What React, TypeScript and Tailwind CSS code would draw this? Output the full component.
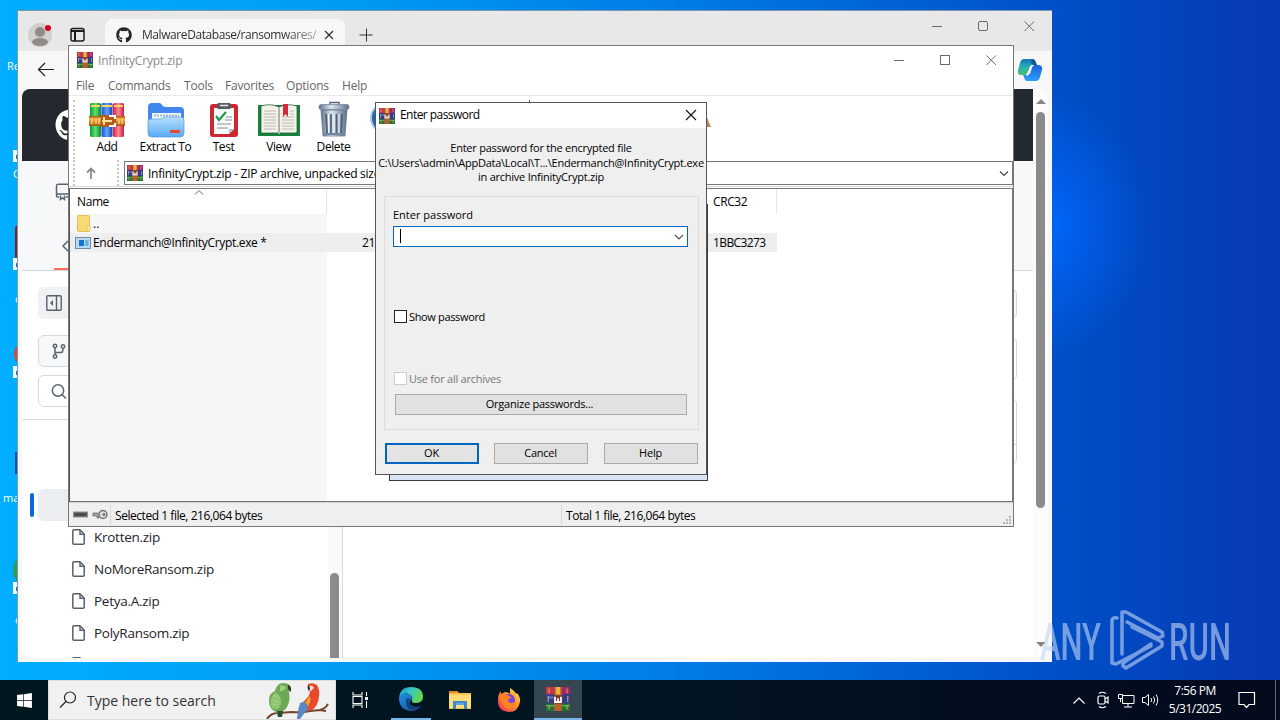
import React from 'react';
import { FaGithub, FaWindows } from 'react-icons/fa';

const WinRarIcon = ({ size = 16 }: { size?: number }) => (
  <svg width={size} height={size} viewBox="0 0 16 16" className="shrink-0">
    <rect y="0" width="16" height="5" fill="#a3266f" />
    <rect y="0" width="5" height="5" fill="#c93549" />
    <rect y="5" width="16" height="6" fill="#2b3e92" />
    <rect x="1" y="6" width="5" height="2" fill="#4a69c4" />
    <rect y="11" width="16" height="5" fill="#23733a" />
    <rect y="12" width="16" height="1" fill="#52ad50" />
    <rect x="5.500" width="5" height="16" fill="#b9602b" />
    <rect x="6.500" width="3" height="5" fill="#f0b13e" />
    <rect x="5" y="5.500" width="6" height="5.500" fill="#7c3320" />
    <path d="M6 6.500v3.500h4V6.500M8 7.500v2" fill="none" stroke="#fff" strokeWidth="1.200" />
    <path d="M2 1v3M2 12v3M14 1v3M14 12v3M1.500 6v4M14.500 6v4" stroke="#d49a4b" strokeWidth=".8" />
  </svg>
);

const AddIcon = () => (
  <svg width="36" height="36" viewBox="0 0 36 36">
    <defs>
      <linearGradient id="gG"><stop stopColor="#0a9c3c" /><stop offset=".5" stopColor="#5fe06c" /><stop offset="1" stopColor="#13813a" /></linearGradient>
      <linearGradient id="gB"><stop stopColor="#1552d8" /><stop offset=".5" stopColor="#62a4ff" /><stop offset="1" stopColor="#1a3fb5" /></linearGradient>
      <linearGradient id="gR"><stop stopColor="#d3213b" /><stop offset=".5" stopColor="#ff8894" /><stop offset="1" stopColor="#c31c43" /></linearGradient>
      <linearGradient id="gO" x2="0" y2="1"><stop stopColor="#a35312" /><stop offset=".3" stopColor="#ffb445" /><stop offset="1" stopColor="#a9530d" /></linearGradient>
    </defs>
    <rect x="1" y="1" width="11" height="34" rx="1.500" fill="url(#gG)" />
    <rect x="12.500" y="1" width="11" height="34" rx="1.500" fill="url(#gB)" />
    <rect x="24" y="1" width="11" height="34" rx="1.500" fill="url(#gR)" />
    <path d="M2 4h9M13 4h10M25 4h9" stroke="#ffd75a" strokeWidth="2" />
    <path d="M0 14h36v10H0z" fill="url(#gO)" />
    <path d="M3 17v5M7 17v5M10 16v6M30 17v5M33 17v5" stroke="#ffd583" strokeWidth="1.300" />
    <rect x="12" y="13" width="15" height="12" rx="1" fill="#b55d18" />
    <path d="M20 14h6v3M26 21v3h-6" fill="none" stroke="#fff" strokeWidth="2" />
    <path d="M13 19h10M15 15v8" stroke="#ffe29a" strokeWidth="2" />
  </svg>
);

const ExtractIcon = () => (
  <svg width="38" height="36" viewBox="0 0 38 36">
    <defs>
      <linearGradient id="fo" x2="0" y2="1"><stop stopColor="#b6e0ff" /><stop offset="1" stopColor="#5aa9f2" /></linearGradient>
    </defs>
    <path d="M1 5q0-4 4-4h7q2 0 3 2t4 2h14q4 0 4 4v14H1z" fill="#4287ef" />
    <path d="M5 11h29v8H5z" fill="#f2f6fb" />
    <path d="M7 13.500h25" stroke="#9db5cf" strokeWidth="2" strokeDasharray="2 1" />
    <path d="M1 19q0-2 3-2h10l3-2h17q3 0 3 3v13q0 4-4 4H5q-4 0-4-4z" fill="url(#fo)" stroke="#559be0" strokeWidth=".7" />
    <rect x="23" y="28" width="10" height="3" rx="1" fill="#e74831" />
  </svg>
);

const TestIcon = () => (
  <svg width="30" height="36" viewBox="0 0 30 36">
    <rect x="1" y="2" width="28" height="33" rx="3" fill="#cf2633" />
    <path d="M5 6h20v21l-5 5H5z" fill="#fbfbfb" />
    <path d="M20 32v-5h5z" fill="#b9bec4" />
    <rect x="8" y="1" width="14" height="6" rx="1.500" fill="#555d64" />
    <path d="M11 3.500h8" stroke="#e8e8e8" strokeWidth="1.500" />
    <path d="m7 14 3 4 7-8" fill="none" stroke="#239a48" strokeWidth="2.200" />
    <path d="M17 15h6M16 18h7M8 22h14M8 26h11" stroke="#8a9095" />
  </svg>
);

const ViewIcon = () => (
  <svg width="44" height="36" viewBox="0 0 44 36">
    <path d="M1 3h42v31H1z" fill="#1b823b" />
    <path d="M4 4q10-3 18 1q8-4 18-1v27H4z" fill="#f3f1ea" stroke="#0d5a26" strokeWidth=".7" />
    <path d="M22 5v27" stroke="#b5b1a6" strokeWidth="2" />
    <path d="M7 9h12M7 12h12M7 15h12M7 18h12M7 21h12M7 24h12M7 27h12M25 15h12M25 18h12M25 21h12M25 24h12M25 27h12M33 9h4M33 12h4" stroke="#bdbab2" />
    <path d="M26 2h5v13l-2.500-3-2.500 3z" fill="#d42b39" />
  </svg>
);

const DeleteIcon = () => (
  <svg width="32" height="37" viewBox="0 0 32 37">
    <defs>
      <linearGradient id="tr"><stop stopColor="#5f7389" /><stop offset=".4" stopColor="#dde7f0" /><stop offset="1" stopColor="#5d7088" /></linearGradient>
    </defs>
    <path d="M12 4V1.500h9V4" fill="none" stroke="#55687d" strokeWidth="1.500" />
    <rect x="1" y="3.500" width="30" height="5" rx="2" fill="url(#tr)" stroke="#6d8097" strokeWidth=".7" />
    <path d="M3 9h26l-2 26H5z" fill="url(#tr)" stroke="#5a6f86" strokeWidth=".7" />
    <path d="M8 13l1 19M13 13v19M18.500 13v19M24 13l-1 19" stroke="#4d627a" strokeWidth="1.800" />
    <path d="M10.500 13v19M16 13v19M21 13v19" stroke="#f3f8fc" />
    <path d="M5 33h22" stroke="#7187a0" strokeWidth="2" />
  </svg>
);

const tools = [
  { label: 'Add', icon: <AddIcon />, box: 'w-[60px]' },
  { label: 'Extract To', icon: <ExtractIcon />, box: 'w-[57px]' },
  { label: 'Test', icon: <TestIcon />, box: 'w-[59px]' },
  { label: 'View', icon: <ViewIcon />, box: 'w-[51px]' },
  { label: 'Delete', icon: <DeleteIcon />, box: 'w-[59px]' },
];

const menus = [
  { label: 'File', box: 'w-[32px]' },
  { label: 'Commands', box: 'w-[76px]' },
  { label: 'Tools', box: 'w-[41px]' },
  { label: 'Favorites', box: 'w-[61px]' },
  { label: 'Options', box: 'w-[56px]' },
  { label: 'Help', box: 'w-[40px]' },
];

const files = ['Krotten.zip', 'NoMoreRansom.zip', 'Petya.A.zip', 'PolyRansom.zip', ''];

const FileIcon = () => (
  <svg width="13" height="16" viewBox="0 0 13 16" fill="none" stroke="#59636e" strokeWidth="1.500">
    <path d="M.8 1.800q0-1 1-1h6L12.200 5v9.200q0 1-1 1H1.800q-1 0-1-1z" />
    <path d="M8 1v4.300h4" />
  </svg>
);

const WindowControls = ({ rounded }: { rounded?: boolean }) => (
  <svg width="104" height="12" viewBox="0 0 104 12" fill="none" stroke="#6b6b6b">
    <path d="M0 6.500h10" />
    <rect x="46.500" y="1.500" width="9" height="9" rx={rounded ? 1.5 : 0} />
    <path d="m92.500 1.500 9.500 9.500M102 1.500 92.500 11" />
  </svg>
);

const ShortcutArrow = () => (
  <svg width="12" height="12" viewBox="0 0 12 12">
    <rect width="12" height="12" fill="#f4f8fb" />
    <path d="M3 9V6q0-2 3-2h1V2l3 3-3 3V6H5v3z" fill="#1b62ad" />
  </svg>
);

function DesktopIcons() {
  return (
    <div className="absolute left-0 top-0 h-[680px] w-[18px] overflow-hidden text-[11px] text-white">
      <span className="absolute left-[7px] top-[58px]">Re</span>
      <span className="absolute left-[13px] top-[166px]">C</span>
      <span className="absolute left-[3px] top-[490px]">ma</span>
      <span className="absolute left-[15px] top-[291px]">c</span>
      <span className="absolute left-[15px] top-[612px]">o</span>
      <div className="absolute left-[15px] top-[225px] h-9 w-6 rounded bg-[#8e1b22]" />
      <div className="absolute left-[14px] top-[342px] h-6 w-6 rounded-full bg-[#df4536]" />
      <div className="absolute left-[15px] top-[452px] h-[22px] w-6 bg-[#174ea8]" />
      <div className="absolute left-[13px] top-[552px] h-9 w-9 rounded-full bg-[#2d9d4c]" />
      <div className="absolute left-[13px] top-[150px]"><ShortcutArrow /></div>
      <div className="absolute left-[13px] top-[258px]"><ShortcutArrow /></div>
      <div className="absolute left-[13px] top-[366px]"><ShortcutArrow /></div>
      <div className="absolute left-[13px] top-[582px]"><ShortcutArrow /></div>
    </div>
  );
}

function BrowserWindow() {
  return (
    <div className="absolute left-[17px] top-[10px] flex h-[652px] w-[1035px] flex-col border-t border-l border-[#7b98ad] bg-[#f7f7f7]">
      <div className="flex h-10 shrink-0 bg-[#e8e8e8]">
        <div className="relative mt-3 ml-[10px] h-6 w-6 rounded-full bg-[#d2cfcc]">
          <svg width="24" height="24" viewBox="0 0 24 24" fill="#8f8b87">
            <circle cx="12" cy="9" r="5" />
            <ellipse cx="12" cy="19" rx="8" ry="4" />
          </svg>
          <div className="absolute top-0.5 left-[17px] h-1.5 w-1.5 rounded-full bg-[#d5001f]" />
        </div>
        <svg width="16" height="16" viewBox="0 0 16 16" className="mt-4 ml-[18px]" fill="none" stroke="#1b1b1b" strokeWidth="1.500">
          <rect x="1" y="1.500" width="13" height="12.500" rx="2" />
          <path d="M1 4h13M5 4v10" strokeWidth="2" />
        </svg>
        <div className="mt-2 ml-[19px] flex h-8 w-[240px] items-center rounded-t-lg bg-[#f7f7f7] pl-[11px]">
          <FaGithub size={16} color="#24292f" />
          <div className="ml-[10px] w-[174px] overflow-hidden bg-linear-to-r from-[#2b2b2b] from-80% to-[#aaa] bg-clip-text text-[12px] tracking-[-0.420px] whitespace-nowrap text-transparent">
            MalwareDatabase/ransomwares/
          </div>
          <svg width="10" height="10" viewBox="0 0 10 10" className="ml-[8px]" stroke="#333" strokeWidth="1.300">
            <path d="m1 1 8 8M9 1 1 9" />
          </svg>
        </div>
        <svg width="14" height="14" viewBox="0 0 14 14" className="mt-[17px] ml-[14px]" stroke="#333">
          <path d="M7.500 .5v13M.5 7h13" />
        </svg>
        <div className="mt-[9px] ml-auto mr-[16px]">
          <WindowControls rounded />
        </div>
      </div>

      <div className="flex h-[38px] shrink-0 items-center justify-between">
        <svg width="18" height="16" viewBox="0 0 18 16" className="ml-[19px]" fill="none" stroke="#222" strokeWidth="1.200">
          <path d="M17 7.500H1.500M8 1 1.500 7.500 8 14" />
        </svg>
        <svg width="26" height="24" viewBox="0 0 26 24" className="mr-[9px]">
          <defs>
            <linearGradient id="cpa" x2="0" y2="1"><stop stopColor="#1474b8" /><stop offset=".5" stopColor="#27b0b5" /><stop offset="1" stopColor="#4cc272" /></linearGradient>
            <linearGradient id="cpb" x2="0" y2="1"><stop stopColor="#1b60d8" /><stop offset="1" stopColor="#2ea0fb" /></linearGradient>
          </defs>
          <path d="M7 1h9q2 0 3 4l1 2h-4q-3 0-4 4l-2 6H4q-4 0-3-5l2-7q1-4 4-4z" fill="url(#cpa)" />
          <path d="M19 23h-9q-2 0-3-4l-1-2h4q3 0 4-4l2-6h6q4 1 3 5l-2 7q-1 4-4 4z" fill="url(#cpb)" />
          <path d="M17 7q-3 0-4 4l-2 6H9q2-1 3-4l1-3q1-3 4-3z" fill="#fff" stroke="#fff" />
          <path d="M15 1q3 0 5 6h-4q-2-1-2-3z" fill="#17549b" />
        </svg>
      </div>

      <div className="mr-[4px] ml-[4px] flex h-[569px] overflow-hidden rounded-lg bg-white">
        <div className="flex w-[1011px] flex-col">
          <div className="flex h-[72px] shrink-0 items-center bg-[#24292f] pl-[33px]">
            <FaGithub size={32} color="#fff" />
          </div>
          <div className="h-[110px] shrink-0 border-b border-[#d1d9e0] bg-[#f6f8fa] pl-[33px]">
            <svg width="16" height="18" viewBox="0 0 16 18" className="mt-[22px]" fill="none" stroke="#59636e" strokeWidth="1.500">
              <path d="M4 14H3q-1.500 0-1.500-1.500V3Q1.500 1.200 3 1.200h11V14h-3M1.500 12q0-1 1.500-1h11M5.500 12.500v4L7.500 15l2 1.500v-4" />
            </svg>
            <svg width="12" height="14" viewBox="0 0 12 14" className="mt-[38px] ml-[6px]" fill="none" stroke="#59636e" strokeWidth="1.500">
              <path d="M7 2 2 7l5 5" />
            </svg>
            <div className="mt-[15px] -ml-px h-[2px] w-24 bg-[#fd6d5c]" />
          </div>
          <div className="flex min-h-0 flex-1">
            <div className="flex w-[321px] shrink-0 flex-col border-r border-[#d1d9e0]">
              <div className="mt-4 ml-4 flex h-8 w-32 items-center rounded-md bg-[#eff1f3] pl-2">
                <svg width="16" height="16" viewBox="0 0 16 16" fill="none" stroke="#59636e" strokeWidth="1.400">
                  <rect x=".8" y=".8" width="14.400" height="14.400" rx="1" />
                  <path d="M10.500 1v14" />
                  <path d="M7 5 4 8l3 3z" fill="#59636e" stroke="none" />
                </svg>
              </div>
              <div className="mt-4 ml-4 flex h-8 w-64 items-center rounded-md border border-[#d1d9e0] bg-[#f6f8fa] pl-[13px]">
                <svg width="14" height="16" viewBox="0 0 14 16" fill="none" stroke="#59636e" strokeWidth="1.500">
                  <circle cx="3" cy="3" r="1.700" />
                  <circle cx="3" cy="13.500" r="1.700" />
                  <circle cx="11" cy="3.500" r="1.700" />
                  <path d="M3 5v6.500M3 9.500h6q2 0 2-4" />
                </svg>
              </div>
              <div className="mt-2 ml-4 flex h-8 w-64 items-center rounded-md border border-[#d1d9e0] pl-[12px]">
                <svg width="16" height="16" viewBox="0 0 16 16" fill="none" stroke="#59636e" strokeWidth="1.500">
                  <circle cx="7" cy="7.500" r="5.700" />
                  <path d="m11 11.500 4 4" />
                </svg>
              </div>
              <div className="mt-3 h-px shrink-0 bg-[#d8dde2]" />
              <div className="flex min-h-0 flex-1">
                <div className="flex-1">
                  <div className="mt-[69px] ml-[8px] flex h-8 items-center">
                    <div className="h-6 w-1 rounded-full bg-[#0969da]" />
                    <div className="ml-[4px] h-8 flex-1 rounded-md bg-[#ebedf0]" />
                  </div>
                  {files.map((file) => (
                    <div key={file} className="flex h-8 items-center pl-[50px] text-[13.500px] tracking-[-0.270px] text-[#1f2328]">
                      <FileIcon />
                      <span className="ml-[9px]">{file}</span>
                    </div>
                  ))}
                </div>
                <div className="w-[14px] bg-[#fafafa] pt-[153px] pl-[2px]">
                  <div className="h-24 w-[9px] rounded-t-full bg-[#8b8b8b]" />
                </div>
              </div>
            </div>
            <div className="flex flex-1 flex-col items-end">
              <div className="mt-[17px] mr-4 h-[31px] w-32 rounded-md border border-[#d1d9e0] bg-[#f6f8fa]" />
              <div className="mt-[18px] mr-4 h-[44px] w-32 rounded-md border border-[#d1d9e0]" />
              <div className="mt-[17px] mr-4 h-[67px] w-32 rounded-md border border-[#d1d9e0] pt-[45px]">
                <div className="h-px bg-[#d1d9e0]" />
              </div>
            </div>
          </div>
        </div>
        <div className="flex w-[15px] flex-col items-center bg-[#fcfcfc] pt-[10px]">
          <div className="h-0 w-0 border-x-[5px] border-b-[5px] border-x-transparent border-b-[#858585]" />
          <div className="mt-2 h-[396px] w-[9px] rounded-full bg-[#8b8b8b]" />
          <div className="mt-auto mb-[11px] h-0 w-0 border-x-[5px] border-t-[5px] border-x-transparent border-t-[#858585]" />
        </div>
      </div>
    </div>
  );
}

function ArchiveWindow() {
  return (
    <div className="absolute left-[68px] top-[45px] flex h-[482px] w-[946px] flex-col overflow-hidden border border-[#777] bg-white text-[12px] tracking-[-0.400px] text-black">
      <div className="flex h-[30px] shrink-0 items-center pb-[2px] pl-2 text-[#8b8b8b]">
        <WinRarIcon />
        <span className="mt-px ml-[5px] tracking-[-0.200px]">InfinityCrypt.zip</span>
        <div className="mr-[15px] ml-auto">
          <WindowControls />
        </div>
      </div>
      <div className="flex h-5 shrink-0 items-center border-b border-[#e9e9e9] pl-[7px] tracking-[-0.200px] text-[#666]">
        {menus.map((m) => (
          <span key={m.label} className={`${m.box} shrink-0 whitespace-nowrap`}>
            {m.label}
          </span>
        ))}
      </div>
      <div className="relative flex h-[63px] shrink-0 pl-[4px]">
        <div className="mt-1 h-[59px] border-l-2 border-dotted border-[#c5c5c5]" />
        <div className="ml-[2px] flex">
          {tools.map((t) => (
            <div key={t.label} className={`${t.box} flex shrink-0 flex-col items-center pt-[6px]`}>
              <div className="flex h-[36px] items-end">{t.icon}</div>
              <span className="leading-[18px] whitespace-nowrap">{t.label}</span>
            </div>
          ))}
        </div>
        <div className="absolute top-[6px] left-[301px] h-8 w-8 rounded-full border-2 border-[#a5c9ec] bg-[#2765b3]" />
        <div className="absolute top-[4px] left-[460px] h-2 w-px bg-[#555]" />
        <svg width="12" height="13" viewBox="0 0 12 13" className="absolute top-[19px] left-[631px]">
          <path d="M6 0 11 12H2z" fill="#bd8662" />
        </svg>
      </div>
      <div className="flex h-[28px] shrink-0 items-center border-b border-[#d9d9d9] pt-px pl-[4px]">
        <div className="h-[26px] border-l-2 border-dotted border-[#c5c5c5]" />
        <svg width="10" height="12" viewBox="0 0 10 12" className="ml-[11px]" fill="none" stroke="#8c8c8c" strokeWidth="1.800">
          <path d="M5 12V2M1 5.500 5 1.500l4 4" />
        </svg>
        <div className="ml-[21px] h-[26px] border-l-2 border-dotted border-[#c5c5c5]" />
        <div className="ml-[5px] flex h-6 flex-1 items-center border border-[#777] pr-1 pl-[2px]">
          <WinRarIcon />
          <span className="mt-px ml-[5px] tracking-[-0.260px] whitespace-nowrap">InfinityCrypt.zip - ZIP archive, unpacked size 216,064 bytes</span>
          <svg width="10" height="6" viewBox="0 0 10 6" className="mt-px mr-[-1px] ml-auto" fill="none" stroke="#444" strokeWidth="1.200">
            <path d="m1 .5 4 4 4-4" />
          </svg>
        </div>
      </div>
      <div className="mt-px flex h-[314px] shrink-0 flex-col border border-[#777] border-l-[#555]">
        <div className="flex h-[25px] shrink-0">
          <div className="relative w-[257px] border-r border-[#e5e5e5] pt-[4px] pl-[7px]">
            Name
            <svg width="10" height="5" viewBox="0 0 10 5" className="absolute top-[1px] left-[124px]" fill="none" stroke="#666">
              <path d="m1 4.500 4-4 4 4" />
            </svg>
          </div>
          <div className="w-[386px]" />
          <div className="w-[64px] border-r border-[#e5e5e5] pt-[4px]">CRC32</div>
        </div>
        <div className="flex h-[19px] w-[257px] shrink-0 items-center bg-[#f6f6f6] pl-[7px]">
          <svg width="14" height="17" viewBox="0 0 14 17">
            <rect x=".5" y=".5" width="12" height="16" rx="1" fill="#f9d976" stroke="#e2bd52" />
            <path d="M10 11h3v5h-3z" fill="#fff0b0" stroke="#dcb145" strokeWidth=".7" />
          </svg>
          <span className="ml-[2px] tracking-normal">..</span>
        </div>
        <div className="flex h-[19px] w-[707px] shrink-0 items-center bg-[#eee] pl-[5px]">
          <svg width="16" height="12" viewBox="0 0 16 12">
            <rect x=".5" y=".5" width="15" height="11" fill="#b7daf2" stroke="#6f8fa8" />
            <rect x="4" y="3" width="5" height="6" fill="#1277ce" />
            <path d="M10 4h3.500M10 6h3.500M10 8h3.500" stroke="#2e86cb" />
          </svg>
          <span className="ml-[2px] w-[269px] tracking-[-0.320px]">Endermanch@InfinityCrypt.exe *</span>
          <span className="w-[351px]">216,064</span>
          <span className="tracking-[-0.600px]">1BBC3273</span>
        </div>
        <div className="w-[257px] flex-1 bg-[#f6f6f6]" />
      </div>
      <div className="flex flex-1 items-center border-t border-[#d0d0d0] bg-[#efefef] tracking-[-0.450px]">
        <svg width="36" height="12" viewBox="0 0 36 12" className="ml-[4px]">
          <rect x=".5" y="3" width="14" height="5" fill="#515658" stroke="#8d9193" />
          <path d="M3 5.500h9" stroke="#2a2a2a" strokeDasharray="1 1" />
          <path d="M20 4h9v3h-3v2h-2V7h-4z" fill="#a4a4a4" stroke="#666" strokeWidth=".7" />
          <circle cx="30" cy="5.500" r="4" fill="#ddd" stroke="#777" strokeWidth="1.500" />
          <circle cx="31" cy="5.500" r="1.500" fill="#777" />
        </svg>
        <div className="ml-[1px] h-5 w-px bg-[#d9d9d9]" />
        <span className="mt-[3px] ml-[4px] w-[446px]">Selected 1 file, 216,064 bytes</span>
        <div className="h-5 w-px bg-[#d9d9d9]" />
        <span className="mt-[3px] ml-[4px]">Total 1 file, 216,064 bytes</span>
        <svg width="9" height="9" viewBox="0 0 9 9" className="mr-[1px] mb-[1px] ml-auto self-end" fill="#b5b5b5">
          <path d="M6 0h2v2H6zM3 3h2v2H3zM6 3h2v2H6zM0 6h2v2H0zM3 6h2v2H3zM6 6h2v2H6z" />
        </svg>
      </div>
    </div>
  );
}

const dialogButton = 'flex items-center justify-center border pr-px';

function PasswordDialog() {
  return (
    <>
      <div className="absolute left-[389px] top-[204px] h-[277px] w-[319px] border border-[#333b45] bg-[#d9e3f4]" />
      <div className="absolute left-[375px] top-[102px] flex h-[373px] w-[332px] flex-col border border-[#555] bg-[#efefef] text-[11px] tracking-[-0.240px] text-black">
        <div className="flex h-[25px] shrink-0 items-center bg-white pl-[3px]">
          <WinRarIcon />
          <span className="mb-px ml-[5px] text-[12px] tracking-[-0.550px]">Enter password</span>
          <svg width="12" height="12" viewBox="0 0 12 12" className="mr-[9px] mb-[2px] ml-auto" stroke="#111" strokeWidth="1.100">
            <path d="m1 1 10 10M11 1 1 11" />
          </svg>
        </div>
        <div className="mt-[13px] flex flex-col items-center text-center leading-[14.700px] whitespace-nowrap">
          <div>Enter password for the encrypted file</div>
          <div>C:\Users\admin\AppData\Local\T...\Endermanch@InfinityCrypt.exe</div>
          <div>in archive InfinityCrypt.zip</div>
        </div>
        <div className="mt-[11px] ml-2 flex h-[234px] w-[315px] shrink-0 flex-col border border-[#dcdcdc] pl-[8px]">
          <div className="mt-[10px] leading-[16px] tracking-normal">Enter password</div>
          <div className="mt-[3px] flex h-[21px] w-[295px] shrink-0 items-center border border-[#0067c0] bg-white pr-[3px] pl-[6px]">
            <div className="mb-[2px] h-[14px] w-px bg-black" />
            <svg width="10" height="6" viewBox="0 0 10 6" className="ml-auto" fill="none" stroke="#555" strokeWidth="1.200">
              <path d="m1 1 4 4 4-4" />
            </svg>
          </div>
          <div className="mt-[63px] ml-px flex h-[13px] items-center">
            <div className="h-[13px] w-[13px] border border-[#222] bg-white" />
            <span className="mt-px ml-[2px] tracking-[-0.350px]">Show password</span>
          </div>
          <div className="mt-[49px] ml-px flex h-[13px] items-center text-[#777]">
            <div className="h-[13px] w-[13px] border border-[#ccc] bg-white" />
            <span className="mt-px ml-[2px]">Use for all archives</span>
          </div>
          <button className="mt-[9px] ml-[2px] flex h-[21px] w-[292px] shrink-0 items-center justify-center border border-[#a9a9a9] bg-[#e1e1e1] pr-[3px]">
            Organize passwords...
          </button>
        </div>
        <div className="mt-[13px] ml-[9px] flex gap-[15px]">
          <button className={`${dialogButton} h-[21px] w-[94px] border-2 border-[#0067c0] bg-[#e3e3e3]`}>OK</button>
          <button className={`${dialogButton} h-[21px] w-[94px] border-[#a9a9a9] bg-[#e1e1e1]`}>Cancel</button>
          <button className={`${dialogButton} ml-px h-[21px] w-[94px] border-[#a9a9a9] bg-[#e1e1e1]`}>Help</button>
        </div>
      </div>
    </>
  );
}

function Watermark() {
  return (
    <div className="absolute left-[1038px] top-[608px] h-[66px] w-[196px] opacity-60">
      <svg width="196" height="66" viewBox="0 0 196 66" fill="none" stroke="#c3d6f5" strokeWidth="3.500" strokeLinejoin="round" strokeLinecap="round">
        <text x="2" y="52" textLength="61" lengthAdjust="spacingAndGlyphs" fontFamily="Roboto" fontWeight="500" fontSize="52" fill="#c3d6f5" stroke="none">
          ANY
        </text>
        <path d="M79 10q-5-1-5 3v42l4 1 35-18" />
        <path d="M84 46V4l4 0 36 20 1 4-5 2L89 14" />
        <path d="M94 19l30 15v4L88 60l-3-2v-3l28-19" />
        <text x="131" y="52" textLength="62" lengthAdjust="spacingAndGlyphs" fontFamily="Roboto" fontWeight="500" fontSize="52" fill="#c3d6f5" stroke="none">
          RUN
        </text>
      </svg>
    </div>
  );
}

const Parrots = () => (
  <svg width="64" height="38" viewBox="0 0 64 38">
    <path d="M1 38q4-6 11-6l14-1q10 1 18-1l10-1q5-1 8-6M54 29l6 1" fill="none" stroke="#75432d" strokeWidth="2" />
    <path d="M17 2q8 0 8 6l-2 3q1 4 0 10-2 7-6 9l-1 5h-4l-2-4Q3 28 3 20 3 12 9 10q2-8 8-8z" fill="#6ba957" />
    <path d="M10 11q-7 4-5 15 4 4 8 1 6-8-3-16z" fill="#8fc673" />
    <path d="M8 14l4 3M7 19l6 2M7 23l5 1" stroke="#abd487" />
    <path d="M14 5q4-2 6 2-3 4-6 3z" fill="#a5cd7e" />
    <path d="M22 4q4 1 3 7l-3-3z" fill="#3a3634" />
    <path d="M11 30h6l-1 6h-4z" fill="#2c4c31" />
    <path d="M42 3q5-2 9 1 3 5 2 12-1 9-7 13l-7 1q-4-4-2-9 6-5 7-10-3-4-2-8z" fill="#e8492a" />
    <path d="M43 14q-1 7-8 10l-2 3q3 2 8-1 6-6 2-12z" fill="#f0a630" />
    <path d="M34 22q4-2 7 1l1 5-5 6-3 4h-3l1-8z" fill="#5688c4" />
    <path d="M43 5q4-1 5 2l-3 3h-3z" fill="#f3ddd0" />
    <path d="M42 4q2 1 2 4l-1 2q-2-2-1-6z" fill="#332b29" />
  </svg>
);

const EdgeIcon = () => (
  <svg width="26" height="26" viewBox="0 0 26 26">
    <defs>
      <linearGradient id="ed" x2="1" y2=".4"><stop stopColor="#1793da" /><stop offset=".5" stopColor="#36c6c5" /><stop offset="1" stopColor="#65d654" /></linearGradient>
      <linearGradient id="ed2" x2="1" y2="1"><stop stopColor="#1f8fdf" /><stop offset="1" stopColor="#124e9c" /></linearGradient>
    </defs>
    <path d="M1 12Q2 1 13 1q12 0 12 10 0 6-8 6-4 0-3-3 1-3-2-5-6-4-11 3z" fill="url(#ed)" />
    <path d="M1 12q3-6 9-4 4 1 4 5-4 3-1 7 4 3 10 0-4 5-10 5Q1 24 1 12z" fill="url(#ed2)" />
    <path d="M9 12q-3 6 3 12 7 1 11-4-6 2-10-1-3-3-1-6z" fill="#173f79" />
  </svg>
);

function Taskbar() {
  return (
    <div className="absolute top-[680px] left-0 flex h-10 w-full bg-linear-to-r from-[#00171f] via-[#021421] to-[#030a1d] text-white">
      <div className="flex w-12 items-center justify-center">
        <FaWindows size={17} />
      </div>
      <div className="flex w-[288px] shrink-0 items-center border border-[#ddd] bg-[#f1f1f1] text-[#333]">
        <svg width="18" height="18" viewBox="0 0 18 18" className="ml-[10px]" fill="none" stroke="#222" strokeWidth="1.200">
          <circle cx="11" cy="6.500" r="5.500" />
          <path d="M7 10.500 1 16.500" />
        </svg>
        <span className="ml-[10px] text-[14px]">Type here to search</span>
        <div className="mr-[5px] ml-auto">
          <Parrots />
        </div>
      </div>
      <div className="flex w-12 items-center justify-center">
        <svg width="18" height="18" viewBox="0 0 18 18" fill="none" stroke="#fff" strokeWidth="1.100">
          <path d="M2 1v3h9V1M2 17v-3h9v3M2 5.500h9v7H2zM15.500 1v4M15.500 10v7" />
          <path d="M14 6h3v3h-3z" fill="#fff" stroke="none" />
        </svg>
      </div>
      <div className="flex w-[54px] items-center justify-center">
        <div className="flex h-full w-10 items-center justify-center border-b-2 border-[#75b5ea]">
          <EdgeIcon />
        </div>
      </div>
      <div className="flex w-[44px] items-center justify-center">
        <svg width="22" height="20" viewBox="0 0 22 20">
          <path d="M0 1h8l2 2h12v16H0z" fill="#f7c64b" />
          <path d="M0 5h22v13H0z" fill="#ffdd79" />
          <path d="M0 1h8l2 2H0z" fill="#d98f23" />
          <path d="M4 19v-8h14v8h-3v-4H7v4z" fill="#3c8bce" />
          <path d="M7 14h8" stroke="#8dc5ed" />
        </svg>
      </div>
      <div className="flex w-[52px] items-center justify-center pl-[2px]">
        <svg width="24" height="24" viewBox="0 0 24 24">
          <defs>
            <linearGradient id="ff" x1="1" x2="0" y2="1"><stop stopColor="#fff050" /><stop offset=".4" stopColor="#ff9a26" /><stop offset="1" stopColor="#f52460" /></linearGradient>
          </defs>
          <path d="M13 0q5 3 6 6 1-1 0-2 5 5 4 10-2 10-11 10Q0 23 1 11q0-5 3-8v3l4-2q3 0 5 2V0z" fill="url(#ff)" />
          <circle cx="12" cy="12" r="6" fill="#7542e5" />
          <path d="M3 8q5-3 9 0l3 2q-4 0-4 3 3 4 8 0-1 7-7 8-8-1-9-13z" fill="#ff831e" />
        </svg>
      </div>
      <div className="flex w-12 items-center justify-center border-b-2 border-[#75b5ea] bg-[#35464f]">
        <WinRarIcon size={24} />
      </div>
      <div className="ml-auto flex items-center">
        <svg width="12" height="7" viewBox="0 0 12 7" fill="none" stroke="#fff" strokeWidth="1.200">
          <path d="m.5 6.500 5.500-5.500 5.500 5.500" />
        </svg>
        <svg width="13" height="18" viewBox="0 0 13 18" className="ml-[12px]" fill="none" stroke="#fff" strokeWidth="1.200">
          <rect x="1" y="5" width="7" height="8" rx="1.500" />
          <path d="m8 8 3-2v6l-3-2M2 2.500Q5 0 9 2.500M2 15.500q3 2.500 7 0" />
        </svg>
        <svg width="17" height="15" viewBox="0 0 17 15" className="ml-[8px]" fill="none" stroke="#fff">
          <path d="M5 2.500h11v8H4.500V6M10 10.500V14M6 14h8M.5 1.500h4v4h-4zM2.500 5.500V9" />
        </svg>
        <svg width="17" height="14" viewBox="0 0 17 14" className="ml-[7px]" fill="none" stroke="#fff">
          <path d="M.5 4.500H3l3.500-3v11L3 9.500H.5zM9 5q1.500 2 0 4M11.500 3.500q2.500 3.500 0 7M14 1.500q3.500 5.500 0 11" />
        </svg>
        <div className="ml-[8px] w-[56px] text-center text-[12px] leading-[18px] tracking-[-0.500px] whitespace-nowrap">
          <div>7:56 PM</div>
          <div>5/31/2025</div>
        </div>
        <svg width="18" height="18" viewBox="0 0 18 18" className="mr-[19px] ml-[15px]" fill="none" stroke="#fff" strokeWidth="1.200">
          <path d="M1 1.500h15.500v12H11l-2.500 3-2.500-3H1z" />
        </svg>
        <div className="mr-[4px] h-10 w-px bg-[#5d6470]" />
      </div>
    </div>
  );
}

export default function App() {
  return (
    <div className="relative h-[720px] w-[1280px] overflow-hidden bg-[radial-gradient(ellipse_110px_130px_at_1040px_225px,#0068ff_0%,#0068ff80_45%,#0068ff00_100%),linear-gradient(to_right,#00adff_0%,#00a2f8_20%,#0080e8_50%,#0050c8_82%,#0639b3_100%)] font-['Open_Sans','Noto_Sans',sans-serif]">
      <DesktopIcons />
      <BrowserWindow />
      <ArchiveWindow />
      <PasswordDialog />
      <Watermark />
      <Taskbar />
    </div>
  );
}
